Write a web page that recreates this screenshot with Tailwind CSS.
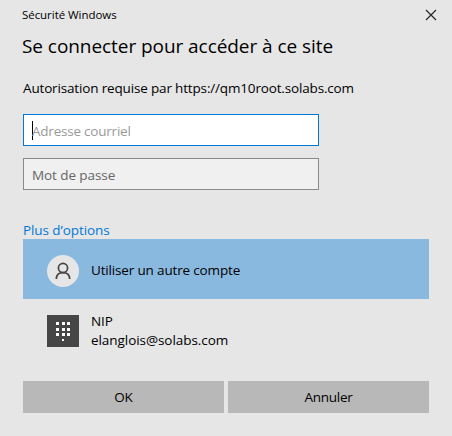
<!DOCTYPE html>
<html lang="fr">
<head>
<meta charset="utf-8">
<title>Sécurité Windows</title>
<script src="https://cdn.jsdelivr.net/npm/@tailwindcss/browser@4"></script>
</head>
<body class="w-[452px] h-[436px] overflow-hidden bg-[#e6e6e6] text-black text-[13.5px] leading-5 tracking-[-0.16px] font-['Open_Sans','Noto_Sans',sans-serif] whitespace-nowrap">
<main class="flex flex-col h-full pl-[23px] pr-[23px]">
  <header class="flex items-start justify-between h-[30px] pt-[5px] -ml-px -mr-[8px]">
    <span class="text-[11.5px] leading-5 tracking-[-0.05px]"><span>Sécurité Windows</span></span>
    <svg class="w-3 h-3 mt-1" viewBox="0 0 12 12" fill="none" stroke="#222" stroke-width="1.1"><path d="M1 1L11 11M11 1L1 11"/></svg>
  </header>
  <h1 class="h-[48px] -ml-px text-[19px] leading-8 tracking-[-0.06px]"><span>Se connecter pour accéder à ce site</span></h1>
  <p class="h-9"><span>Autorisation requise par https://qm10root.solabs.com</span></p>
  <div class="flex items-center w-[296px] h-8 shrink-0 border border-[#0078d7] bg-white pl-2 pt-0.5 text-[#999] tracking-[-0.22px]">
    <i class="w-px h-[19px] -mt-0.5 bg-black"></i><span class="-ml-px">Adresse courriel</span>
  </div>
  <div class="flex items-center w-[296px] h-8 shrink-0 mt-3 border border-[#8a8a8a] bg-[#f0f0f0] pl-2 pt-0.5 text-[#666] tracking-[-0.08px]"><span>Mot de passe</span></div>
  <a class="mt-[30px] h-[19px] text-[#0078d7] tracking-[-0.08px]"><span>Plus d’options</span></a>
  <div class="flex items-center h-[60px] w-[406px] shrink-0 bg-[#8ab9e0] pl-6 pt-1">
    <svg class="w-8 h-8 shrink-0" viewBox="0 0 32 32" fill="none" stroke="#444" stroke-width="1.7"><circle cx="16" cy="16" r="16" fill="#e6e6e6" stroke="none"/><circle cx="16" cy="13" r="4.6"/><path d="M9.3 24C9.5 20 12 17.7 16 17.7S22.5 20 22.7 24"/></svg>
    <span class="ml-3 -mt-0.5">Utiliser un autre compte</span>
  </div>
  <div class="flex h-[82px] pt-4 pl-6">
    <svg class="w-8 h-8 shrink-0" viewBox="0 0 32 32" fill="#fff" shape-rendering="crispEdges"><path fill="#464646" d="M0 0H32V32H0Z"/><path d="M9 7h3v3H9zM15 7h3v3h-3zM20 7h3v3h-3zM9 13h3v3H9zM15 13h3v3h-3zM20 13h3v3h-3zM9 18h3v3H9zM15 18h3v3h-3zM20 18h3v3h-3zM15 24h2v2h-2z"/></svg>
    <div class="ml-3 -mt-[3px] leading-[19px] tracking-[-0.06px]"><div><span>NIP</span></div><div><span>elanglois@solabs.com</span></div></div>
  </div>
  <footer class="flex gap-1 h-8">
    <button class="w-[201px] bg-[#b8b8b8]"><span>OK</span></button>
    <button class="w-[201px] bg-[#b8b8b8] tracking-[-0.25px]"><span>Annuler</span></button>
  </footer>
</main>
</body>
</html>
